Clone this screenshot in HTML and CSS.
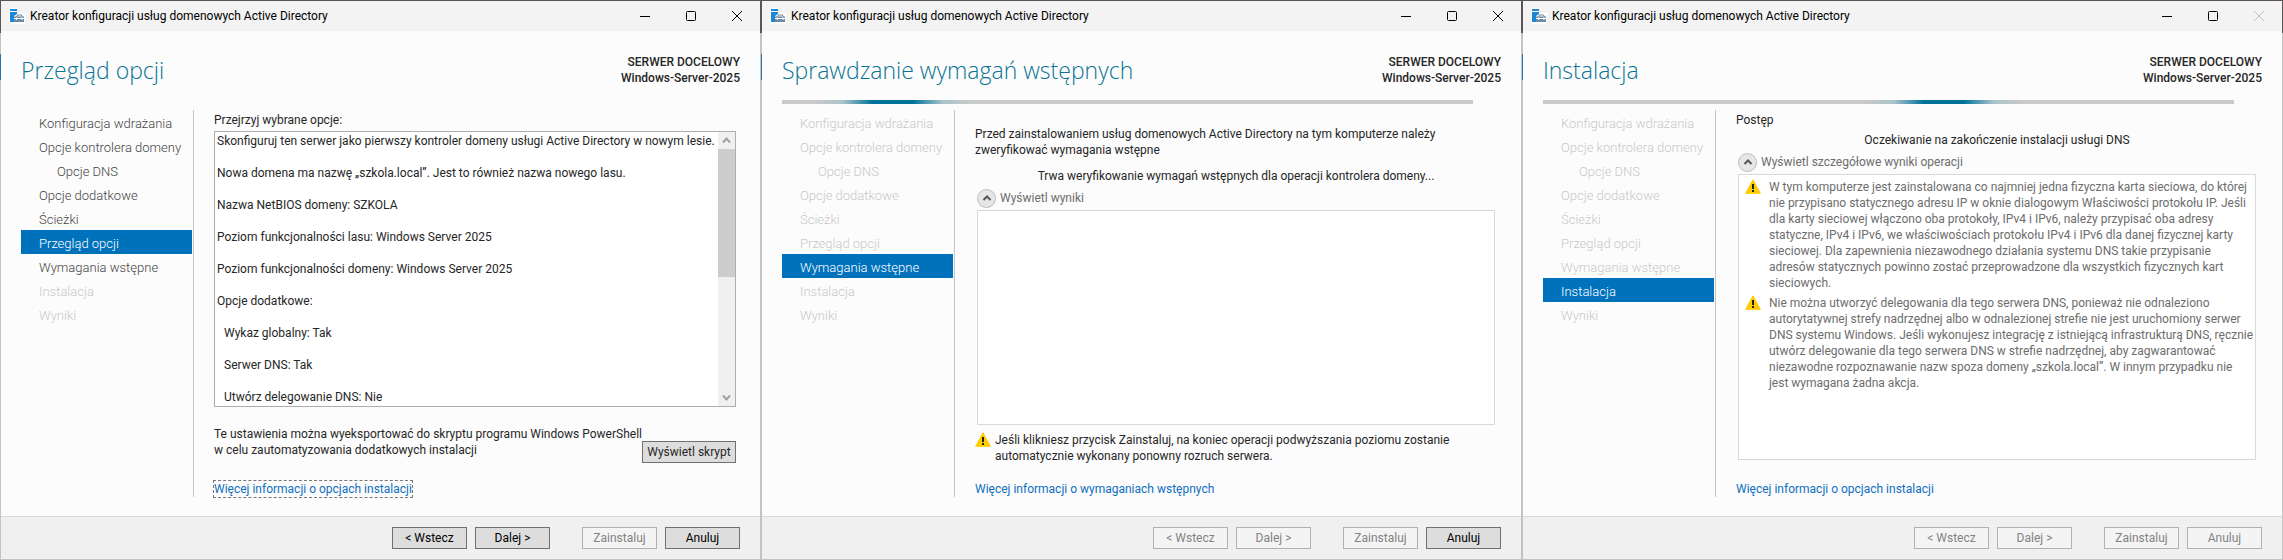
FILE: index.html
```html
<!DOCTYPE html>
<html lang="pl">
<head>
<meta charset="utf-8">
<title>Kreator konfiguracji usług domenowych Active Directory</title>
<link rel="stylesheet" href="styles.css">
</head>
<body>
<svg class="sprite" aria-hidden="true">
  <symbol id="icon-server" viewBox="0 0 16 16">
    <path fill="#fff" d="M0 0h8v5h8v11H0z"/>
    <path fill="#1b87d6" d="M1 1h7v2H1zM1 4h7v2L5 8v6H1z"/>
    <path fill="#6f8aa3" d="M5 8.500h2L8.500 6.500h4L14 8.500h1V14H5z"/>
    <path fill="#fff" d="M8 8.500l1-1h3l1 1zM5 10h2v-.8h1V10h4.500v-.8h1V10H15v.9h-1.500v.8h-1v-.8H8v.8H7v-.8H5z"/>
  </symbol>
  <symbol id="icon-warning" viewBox="0 0 16 15">
    <path fill="#fc0" stroke="#fc0" stroke-linejoin="round" d="M8 .8L15.300 14.300H.7z"/>
    <path fill="#222" d="M7 5h2v5H7zM7 11h2v2H7z"/>
  </symbol>
  <symbol id="icon-up" viewBox="0 0 10 10"><path fill="none" stroke="currentColor" stroke-width="2" d="M1.500 7L5 3.500 8.500 7"/></symbol>
  <symbol id="icon-min" viewBox="0 0 10 10"><path stroke="currentColor" d="M0 5.500h10"/></symbol>
  <symbol id="icon-max" viewBox="0 0 10 10"><rect x=".5" y=".5" width="9" height="9" rx="1" fill="none" stroke="currentColor"/></symbol>
  <symbol id="icon-close" viewBox="0 0 10 10"><path stroke="currentColor" d="M0 0l10 10M10 0L0 10"/></symbol>
</svg>

<div class="desktop">

  <section class="window">
    <header class="titlebar">
      <svg class="app-icon"><use href="#icon-server"/></svg>
      <span class="titlebar-text">Kreator konfiguracji usług domenowych Active Directory</span>
      <button class="caption" aria-label="Minimalizuj"><svg><use href="#icon-min"/></svg></button>
      <button class="caption" aria-label="Maksymalizuj"><svg><use href="#icon-max"/></svg></button>
      <button class="caption" aria-label="Zamknij"><svg><use href="#icon-close"/></svg></button>
    </header>
    <div class="heading">
      <h1>Przegląd opcji</h1>
      <p class="target">SERWER DOCELOWY<br>Windows-Server-2025</p>
    </div>
    <div class="track"></div>
    <div class="body">
      <nav class="steps">
        <a class="step" href="#">Konfiguracja wdrażania</a>
        <a class="step" href="#">Opcje kontrolera domeny</a>
        <a class="step sub" href="#">Opcje DNS</a>
        <a class="step" href="#">Opcje dodatkowe</a>
        <a class="step" href="#">Ścieżki</a>
        <a class="step current" href="#">Przegląd opcji</a>
        <a class="step" href="#">Wymagania wstępne</a>
        <a class="step off">Instalacja</a>
        <a class="step off">Wyniki</a>
      </nav>
      <main class="content">
        <p class="label">Przejrzyj wybrane opcje:</p>
        <div class="review">
          <div class="review-text">
            <p>Skonfiguruj ten serwer jako pierwszy kontroler domeny usługi Active Directory w nowym lesie.</p>
            <p>Nowa domena ma nazwę „szkola.local”. Jest to również nazwa nowego lasu.</p>
            <p>Nazwa NetBIOS domeny: SZKOLA</p>
            <p>Poziom funkcjonalności lasu: Windows Server 2025</p>
            <p>Poziom funkcjonalności domeny: Windows Server 2025</p>
            <p>Opcje dodatkowe:</p>
            <p class="nested">Wykaz globalny: Tak</p>
            <p class="nested">Serwer DNS: Tak</p>
            <p class="nested">Utwórz delegowanie DNS: Nie</p>
          </div>
          <div class="scrollbar">
            <svg class="arrow" viewBox="0 0 17 17"><path d="M5 10.500L8.500 6.500 12 10.500"/></svg>
            <div class="thumb"></div>
            <svg class="arrow" viewBox="0 0 17 17"><path d="M5 6.500l3.500 4 3.500-4"/></svg>
          </div>
        </div>
        <div class="export">
          <p>Te ustawienia można wyeksportować do skryptu programu Windows PowerShell<br>w celu zautomatyzowania dodatkowych instalacji</p>
          <button class="btn script">Wyświetl skrypt</button>
        </div>
        <a class="more focused" href="#">Więcej informacji o opcjach instalacji</a>
      </main>
    </div>
    <footer class="footer">
      <button class="btn">&lt; Wstecz</button>
      <button class="btn">Dalej &gt;</button>
      <button class="btn apart" disabled>Zainstaluj</button>
      <button class="btn">Anuluj</button>
    </footer>
  </section>

  <section class="window">
    <header class="titlebar">
      <svg class="app-icon"><use href="#icon-server"/></svg>
      <span class="titlebar-text">Kreator konfiguracji usług domenowych Active Directory</span>
      <button class="caption" aria-label="Minimalizuj"><svg><use href="#icon-min"/></svg></button>
      <button class="caption" aria-label="Maksymalizuj"><svg><use href="#icon-max"/></svg></button>
      <button class="caption" aria-label="Zamknij"><svg><use href="#icon-close"/></svg></button>
    </header>
    <div class="heading">
      <h1>Sprawdzanie wymagań wstępnych</h1>
      <p class="target">SERWER DOCELOWY<br>Windows-Server-2025</p>
    </div>
    <div class="track busy" role="progressbar" aria-label="Sprawdzanie" style="--at:16%"></div>
    <div class="body">
      <nav class="steps">
        <a class="step off">Konfiguracja wdrażania</a>
        <a class="step off">Opcje kontrolera domeny</a>
        <a class="step off sub">Opcje DNS</a>
        <a class="step off">Opcje dodatkowe</a>
        <a class="step off">Ścieżki</a>
        <a class="step off">Przegląd opcji</a>
        <a class="step current" href="#">Wymagania wstępne</a>
        <a class="step off">Instalacja</a>
        <a class="step off">Wyniki</a>
      </nav>
      <main class="content">
        <p class="intro">Przed zainstalowaniem usług domenowych Active Directory na tym komputerze należy<br>zweryfikować wymagania wstępne</p>
        <p class="status">Trwa weryfikowanie wymagań wstępnych dla operacji kontrolera domeny...</p>
        <button class="toggle"><span class="toggle-ring"><svg><use href="#icon-up"/></svg></span>Wyświetl wyniki</button>
        <div class="results"></div>
        <div class="notice">
          <svg class="warn"><use href="#icon-warning"/></svg>
          <p>Jeśli klikniesz przycisk Zainstaluj, na koniec operacji podwyższania poziomu zostanie<br>automatycznie wykonany ponowny rozruch serwera.</p>
        </div>
        <a class="more" href="#">Więcej informacji o wymaganiach wstępnych</a>
      </main>
    </div>
    <footer class="footer">
      <button class="btn" disabled>&lt; Wstecz</button>
      <button class="btn" disabled>Dalej &gt;</button>
      <button class="btn apart" disabled>Zainstaluj</button>
      <button class="btn">Anuluj</button>
    </footer>
  </section>

  <section class="window">
    <header class="titlebar">
      <svg class="app-icon"><use href="#icon-server"/></svg>
      <span class="titlebar-text">Kreator konfiguracji usług domenowych Active Directory</span>
      <button class="caption" aria-label="Minimalizuj"><svg><use href="#icon-min"/></svg></button>
      <button class="caption" aria-label="Maksymalizuj"><svg><use href="#icon-max"/></svg></button>
      <button class="caption" aria-label="Zamknij" disabled><svg><use href="#icon-close"/></svg></button>
    </header>
    <div class="heading">
      <h1>Instalacja</h1>
      <p class="target">SERWER DOCELOWY<br>Windows-Server-2025</p>
    </div>
    <div class="track busy" role="progressbar" aria-label="Instalacja" style="--at:58%"></div>
    <div class="body">
      <nav class="steps">
        <a class="step off">Konfiguracja wdrażania</a>
        <a class="step off">Opcje kontrolera domeny</a>
        <a class="step off sub">Opcje DNS</a>
        <a class="step off">Opcje dodatkowe</a>
        <a class="step off">Ścieżki</a>
        <a class="step off">Przegląd opcji</a>
        <a class="step off">Wymagania wstępne</a>
        <a class="step current" href="#">Instalacja</a>
        <a class="step off">Wyniki</a>
      </nav>
      <main class="content">
        <p class="label">Postęp</p>
        <p class="status">Oczekiwanie na zakończenie instalacji usługi DNS</p>
        <button class="toggle"><span class="toggle-ring"><svg><use href="#icon-up"/></svg></span>Wyświetl szczegółowe wyniki operacji</button>
        <div class="results tall">
          <div class="result">
            <svg class="warn"><use href="#icon-warning"/></svg>
            <p>W tym komputerze jest zainstalowana co najmniej jedna fizyczna karta sieciowa, do której<br>nie przypisano statycznego adresu IP w oknie dialogowym Właściwości protokołu IP. Jeśli<br>dla karty sieciowej włączono oba protokoły, IPv4 i IPv6, należy przypisać oba adresy<br>statyczne, IPv4 i IPv6, we właściwościach protokołu IPv4 i IPv6 dla danej fizycznej karty<br>sieciowej. Dla zapewnienia niezawodnego działania systemu DNS takie przypisanie<br>adresów statycznych powinno zostać przeprowadzone dla wszystkich fizycznych kart<br>sieciowych.</p>
          </div>
          <div class="result">
            <svg class="warn"><use href="#icon-warning"/></svg>
            <p>Nie można utworzyć delegowania dla tego serwera DNS, ponieważ nie odnaleziono<br>autorytatywnej strefy nadrzędnej albo w odnalezionej strefie nie jest uruchomiony serwer<br>DNS systemu Windows. Jeśli wykonujesz integrację z istniejącą infrastrukturą DNS, ręcznie<br>utwórz delegowanie dla tego serwera DNS w strefie nadrzędnej, aby zagwarantować<br>niezawodne rozpoznawanie nazw spoza domeny „szkola.local”. W innym przypadku nie<br>jest wymagana żadna akcja.</p>
          </div>
        </div>
        <a class="more" href="#">Więcej informacji o opcjach instalacji</a>
      </main>
    </div>
    <footer class="footer">
      <button class="btn" disabled>&lt; Wstecz</button>
      <button class="btn" disabled>Dalej &gt;</button>
      <button class="btn apart" disabled>Zainstaluj</button>
      <button class="btn" disabled>Anuluj</button>
    </footer>
  </section>

</div>
</body>
</html>
```
FILE: styles.css
```css
* { box-sizing: border-box; }

body {
  margin: 0;
  color: #262626;
  font: 12px/16px Roboto, "Noto Sans", sans-serif;
}

h1, p { margin: 0; }

button { font: inherit; color: inherit; }

.sprite { display: none; }

.desktop {
  display: grid;
  grid-template-columns: repeat(3, minmax(0, 1fr));
  min-height: 100vh;
}

/* The 1px padding shows the window edge: dark by the title bar, grey below. */
.window {
  display: flex;
  flex-direction: column;
  padding: 1px;
  background:
    linear-gradient(#2a76b0, #2a76b0) 0 54px / 1px 26px no-repeat,
    linear-gradient(#5a5557 33px, #c3c3c3 33px);
}

.titlebar {
  display: flex;
  align-items: center;
  height: 30px;
  padding-left: 8px;
  background: #f3f3f3;
  color: #000;
}

.app-icon { width: 16px; height: 16px; }

.titlebar-text { flex: 1; padding-left: 5px; white-space: nowrap; }

.caption {
  display: flex;
  align-items: center;
  justify-content: center;
  width: 46px;
  height: 30px;
  padding: 0;
  border: 0;
  background: none;
}

.caption svg { width: 10px; height: 10px; }
.caption:disabled { color: #c4c4c4; }

.heading {
  display: flex;
  justify-content: space-between;
  height: 69px;
  padding: 23px 20px 0;
  background: #fcfcfc;
}

h1 {
  color: #0b7495;
  font-family: "Open Sans", "Noto Sans", sans-serif;
  font-size: 23px;
  font-weight: 300;
  line-height: 32px;
  white-space: nowrap;
}

.target { font-weight: 500; text-align: right; }

.track {
  height: 10px;
  padding: 0 48px 6px 20px;
  background: #fcfcfc;
}

.track::before { content: ""; display: block; height: 4px; }

.busy::before {
  background: linear-gradient(90deg, #cacaca calc(var(--at) - 80px), #a9c3cb calc(var(--at) - 50px), #00729a calc(var(--at) - 20px), #00729a calc(var(--at) + 20px), #a9c3cb calc(var(--at) + 50px), #cacaca calc(var(--at) + 80px));
}

.body {
  display: flex;
  flex: 1;
  padding: 0 24px 19px 20px;
  background: #fcfcfc;
}

.steps {
  display: flex;
  flex: none;
  flex-direction: column;
  width: 173px;
  padding-right: 1px;
  border-right: 1px solid #c6c6c6;
}

.step {
  height: 24px;
  padding-left: 18px;
  color: #444;
  font-size: 13px;
  font-weight: 300;
  line-height: 28px;
  text-decoration: none;
  white-space: nowrap;
}

.sub { padding-left: 36px; }
.off { color: #c8c8c8; }
.current { background: #0072bc; color: #fff; }

.content {
  display: flex;
  flex: 1;
  flex-direction: column;
  min-width: 0;
  padding-left: 20px;
}

.content p { white-space: nowrap; }

.label { padding: 2px 0 3px; }

.review {
  display: flex;
  flex: 1;
  border: 1px solid #abadb3;
  background: #fff;
}

.review-text {
  display: flex;
  flex: 1;
  flex-direction: column;
  gap: 16px;
  min-width: 0;
  padding: 1px 0 0 2px;
}

.nested { padding-left: 7px; }

.scrollbar {
  display: flex;
  flex-direction: column;
  width: 17px;
  background: #f0f0f0;
}

.arrow { width: 17px; height: 17px; }
.arrow path { fill: none; stroke: #a0a0a0; stroke-width: 2; }
.arrow:last-child { margin-top: auto; }
.thumb { height: 128px; background: #cdcdcd; }

.export {
  display: flex;
  align-items: flex-end;
  justify-content: space-between;
  height: 56px;
  margin-bottom: 18px;
}

.export p { flex: 1; min-width: 0; padding-bottom: 5px; }

.btn {
  width: 75px;
  height: 22px;
  padding: 1px 0 0;
  border: 1px solid #707070;
  background: #ddd;
  color: #000;
  line-height: 19px;
  white-space: nowrap;
}

.btn:disabled {
  border-color: #adb2b5;
  background: #f4f4f4;
  color: #838383;
}

.script { flex: none; width: 94px; color: #262626; }

.more {
  align-self: flex-start;
  color: #0f6fc0;
  text-decoration: none;
  white-space: nowrap;
}

.focused { outline: 1px dashed #777; }

.intro { padding-top: 16px; }
.status { padding-top: 10px; text-align: center; }
.label + .status { padding-top: 1px; }

.toggle {
  display: flex;
  align-items: center;
  gap: 4px;
  height: 20px;
  margin: 4px 0 2px 2px;
  padding: 0;
  border: 0;
  background: none;
  color: #6d6d6d;
}

.toggle-ring {
  display: flex;
  align-items: center;
  justify-content: center;
  width: 19px;
  height: 19px;
  border: 1px solid #bdbdbd;
  border-radius: 50%;
  background: #e6e6e6;
  color: #555;
}

.toggle-ring svg { width: 10px; height: 10px; }

.results {
  flex: 1;
  margin: 0 2px;
  border: 1px solid #d9d9d9;
  background: #fff;
}

.tall {
  display: flex;
  flex-direction: column;
  gap: 4px;
  margin-bottom: 21px;
  padding: 4px 6px;
  color: #6d6d6d;
}

.result { display: flex; gap: 8px; }

.warn { flex: none; width: 16px; height: 15px; }

.notice { display: flex; gap: 4px; padding: 7px 0 17px; }

.footer {
  display: flex;
  justify-content: flex-end;
  gap: 8px;
  padding: 10px 20px;
  border-top: 1px solid #d9d9d9;
  background: #f0f0f0;
}

.apart { margin-left: 24px; }
```
